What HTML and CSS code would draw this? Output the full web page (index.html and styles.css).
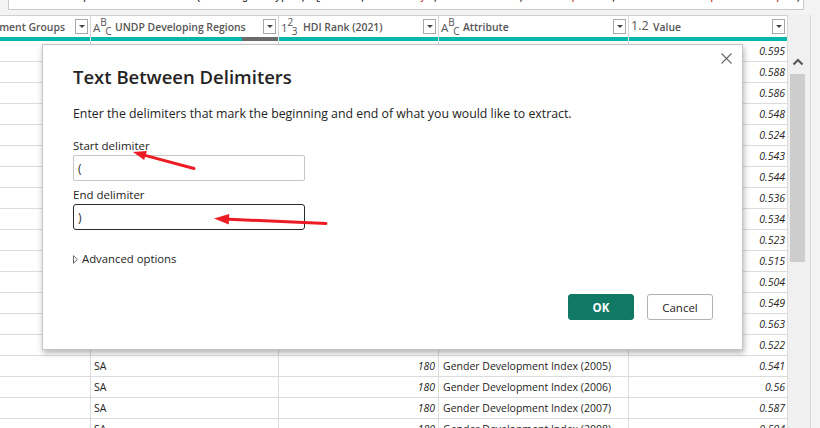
FILE: index.html
```html
<!DOCTYPE html>
<html lang="en">
<head>
<meta charset="utf-8">
<title>Text Between Delimiters</title>
<link rel="stylesheet" href="styles.css">
</head>
<body>
<div class="formula"><span class="code">= Table.UnpivotOtherColumns(#"Changed Type", {<span class="str">"ISO3"</span>, <span class="str">"Country"</span>, <span class="str">"Continent"</span>, <span class="str">"Hemisphere"</span>, <span class="str">"Human Development Groups"</span>, <span class="str">"UNDP Developing Regions"</span>}, <span class="str">"Attribute"</span>, <span class="str">"Value"</span>)</span></div>

<div class="main">
  <div class="grid">
    <div class="hcell h0"><span class="htext">Human Development Groups</span><span class="dd"></span></div>
    <div class="hcell"><span class="ticon"><span class="tA">A</span><span class="tB">B</span><span class="tC">C</span></span><span class="htext">UNDP Developing Regions</span><span class="dd"></span></div>
    <div class="hcell"><span class="ticon"><span class="tA">1</span><span class="tB">2</span><span class="tC">3</span></span><span class="htext">HDI Rank (2021)</span><span class="dd"></span></div>
    <div class="hcell"><span class="ticon"><span class="tA">A</span><span class="tB">B</span><span class="tC">C</span></span><span class="htext">Attribute</span><span class="dd"></span></div>
    <div class="hcell"><span class="ticon dec">1.2</span><span class="htext">Value</span><span class="dd"></span></div>

    <div class="qcell"></div>
    <div class="qcell q-err"></div>
    <div class="qcell"></div>
    <div class="qcell"></div>
    <div class="qcell"></div>

    <div class="c"></div><div class="c"></div><div class="c"></div><div class="c"></div><div class="c n v">0.595</div>
    <div class="c"></div><div class="c"></div><div class="c"></div><div class="c"></div><div class="c n v">0.588</div>
    <div class="c"></div><div class="c"></div><div class="c"></div><div class="c"></div><div class="c n v">0.586</div>
    <div class="c"></div><div class="c"></div><div class="c"></div><div class="c"></div><div class="c n v">0.548</div>
    <div class="c"></div><div class="c"></div><div class="c"></div><div class="c"></div><div class="c n v">0.524</div>
    <div class="c"></div><div class="c"></div><div class="c"></div><div class="c"></div><div class="c n v">0.543</div>
    <div class="c"></div><div class="c"></div><div class="c"></div><div class="c"></div><div class="c n v">0.544</div>
    <div class="c"></div><div class="c"></div><div class="c"></div><div class="c"></div><div class="c n v">0.536</div>
    <div class="c"></div><div class="c"></div><div class="c"></div><div class="c"></div><div class="c n v">0.534</div>
    <div class="c"></div><div class="c"></div><div class="c"></div><div class="c"></div><div class="c n v">0.523</div>
    <div class="c"></div><div class="c"></div><div class="c"></div><div class="c"></div><div class="c n v">0.515</div>
    <div class="c"></div><div class="c"></div><div class="c"></div><div class="c"></div><div class="c n v">0.504</div>
    <div class="c"></div><div class="c"></div><div class="c"></div><div class="c"></div><div class="c n v">0.549</div>
    <div class="c"></div><div class="c"></div><div class="c"></div><div class="c"></div><div class="c n v">0.563</div>
    <div class="c"></div><div class="c"></div><div class="c"></div><div class="c"></div><div class="c n v">0.522</div>
    <div class="c"></div><div class="c t">SA</div><div class="c n">180</div><div class="c t a">Gender Development Index (2005)</div><div class="c n v">0.541</div>
    <div class="c"></div><div class="c t">SA</div><div class="c n">180</div><div class="c t a">Gender Development Index (2006)</div><div class="c n v">0.56</div>
    <div class="c"></div><div class="c t">SA</div><div class="c n">180</div><div class="c t a">Gender Development Index (2007)</div><div class="c n v">0.587</div>
    <div class="c"></div><div class="c t">SA</div><div class="c n">180</div><div class="c t a">Gender Development Index (2008)</div><div class="c n v">0.594</div>
  </div>
  <div class="vscroll">
    <svg class="vs-up" width="12" height="8" viewBox="0 0 12 8"><path d="M1.5 6.5 L6 2 L10.5 6.5" fill="none" stroke="#555" stroke-width="2"/></svg>
    <div class="vs-thumb"></div>
  </div>
  <div class="rest"></div>
</div>

<div class="dialog">
  <svg class="close" width="11" height="11" viewBox="0 0 11 11"><path d="M0.5 0.5 L10.5 10.5 M10.5 0.5 L0.5 10.5" stroke="#666" stroke-width="1.1" fill="none"/></svg>
  <h1 class="title">Text Between Delimiters</h1>
  <p class="desc">Enter the delimiters that mark the beginning and end of what you would like to extract.</p>
  <label class="lbl lbl-first">Start delimiter</label>
  <input class="field" type="text" value="(">
  <label class="lbl">End delimiter</label>
  <input class="field field-focus" type="text" value=")">
  <div class="adv">
    <svg width="5" height="9" viewBox="0 0 5 9"><path d="M0.5 0.7 L4.4 4.5 L0.5 8.3 Z" fill="none" stroke="#555" stroke-width="0.9"/></svg>
    <span>Advanced options</span>
  </div>
  <div class="buttons">
    <button class="btn btn-ok">OK</button>
    <button class="btn btn-cancel">Cancel</button>
  </div>
</div>

<svg class="arrows" width="820" height="428" viewBox="0 0 820 428">
  <line x1="194" y1="168.5" x2="145" y2="155.4" stroke="#ec1c24" stroke-width="3" stroke-linecap="round"/>
  <polygon points="133,152 146.9,150.9 144.2,160" fill="#ec1c24"/>
  <line x1="326" y1="223.5" x2="229" y2="219.2" stroke="#ec1c24" stroke-width="3" stroke-linecap="round"/>
  <polygon points="214,218.5 229.2,213.9 228.8,224.4" fill="#ec1c24"/>
</svg>
</body>
</html>
```

FILE: styles.css
```css
* { box-sizing: border-box; }

body {
  margin: 0;
  width: 820px;
  height: 428px;
  overflow: hidden;
  position: relative;
  background: #f3f3f3;
  font-family: "Open Sans", "Noto Sans", sans-serif;
  color: #252423;
}

/* formula bar (only its lower edge is visible) */
.formula {
  margin-left: 8px;
  width: 796px;
  height: 10px;
  background: #fff;
  border: 1px solid #c8c8c8;
  border-top: 0;
  overflow: hidden;
  padding-left: 8px;
}
.code {
  display: block;
  margin-top: -9px;
  font: 11px/13px "Liberation Mono", monospace;
  white-space: pre;
  color: #111;
}
.str { color: #c21818; }

/* main area */
.main {
  display: flex;
  margin-top: 5px;
  height: 413px;
}

.grid {
  width: 788px;
  flex: none;
  height: 413px;
  overflow: hidden;
  background: #fff;
  border-top: 1px solid #d0d0d0;
  display: grid;
  grid-template-columns: 91px 188px 160px 190px 159px;
  grid-template-rows: 21px 4px;
  grid-auto-rows: 21px;
  align-content: start;
}

.hcell {
  display: flex;
  align-items: center;
  padding: 0 2px 0 2px;
  border-right: 1px solid #d6d6d6;
  overflow: hidden;
  white-space: nowrap;
  font-size: 10.4px;
  font-weight: 600;
  color: #555;
}
.h0 { justify-content: flex-end; }
.htext { flex: none; }
.h0 .dd { margin-left: 10px; }

.ticon {
  flex: none;
  width: 22px;
  font-size: 10px;
  font-weight: 400;
  color: #555;
  line-height: 1;
}
.tA { font-size: 11.5px; vertical-align: -2px; }
.tB { vertical-align: 4px; margin-right: -1.5px; }
.tC { vertical-align: -5px; }
.dec { font-size: 12.5px; vertical-align: 0; }

.dd {
  flex: none;
  margin-left: auto;
  width: 13px;
  height: 15px;
  border: 1px solid #a8a8a8;
  background: #fff;
  display: flex;
  justify-content: center;
  align-items: flex-start;
  padding-top: 5px;
}
.dd::after {
  content: "";
  border-left: 3px solid transparent;
  border-right: 3px solid transparent;
  border-top: 3px solid #444;
}

.qcell {
  background: #01b8aa;
  border-right: 1px solid #e6e6e6;
}
.q-err {
  background: linear-gradient(to right, #01b8aa 0 151px, #6b6b6b 151px);
}

.c {
  border-right: 1px solid #dcdcdc;
  border-bottom: 1px solid #dcdcdc;
  font-size: 10.5px;
  line-height: 20px;
  white-space: nowrap;
  overflow: hidden;
  color: #252423;
}
.t { padding-left: 3px; }
.a { padding-left: 4px; }
.n { text-align: right; font-style: italic; padding-right: 3px; }
.v { padding-right: 2px; }

/* vertical scrollbar */
.vscroll {
  width: 23px;
  flex: none;
  background: #f0f0f0;
  border-right: 1px solid #d6d6d6;
  display: flex;
  flex-direction: column;
}
.vs-up {
  margin-top: 43px;
  margin-left: 4px;
}
.vs-thumb {
  margin-top: 8px;
  margin-left: 2px;
  width: 15px;
  height: 188px;
  background: #cdcdcd;
}
.rest { flex: 1; background: #f3f3f3; }

/* dialog */
.dialog {
  position: absolute;
  left: 42px;
  top: 44px;
  width: 701px;
  height: 306px;
  background: #fff;
  border: 1px solid #c6c6c6;
  box-shadow: 1px 3px 6px rgba(0, 0, 0, 0.3);
  padding: 20px 29px 0 30px;
  display: flex;
  flex-direction: column;
  align-items: flex-start;
}
.close {
  position: absolute;
  top: 8px;
  right: 10px;
}
.title {
  margin: 0;
  font-size: 18.5px;
  line-height: 24px;
  font-weight: 600;
  color: #252423;
}
.desc {
  margin: 16px 0 0;
  font-size: 12.34px;
  line-height: 18px;
  color: #252423;
}
.lbl {
  display: block;
  margin-top: 5px;
  margin-bottom: 1px;
  font-size: 11.5px;
  line-height: 17px;
  color: #252423;
}
.lbl-first { margin-top: 14px; }

.field {
  display: block;
  width: 232px;
  height: 26px;
  margin: 0;
  padding: 0 4px;
  border: 1px solid #c8c6c4;
  border-radius: 2px;
  background: #fff;
  font-family: "Open Sans", sans-serif;
  font-size: 12px;
  color: #323130;
  outline: none;
}
.field-focus {
  border-color: #2b2b2b;
  border-radius: 3px;
}

.adv {
  margin-top: 21px;
  display: flex;
  align-items: center;
  gap: 4px;
  font-size: 11.33px;
  line-height: 16px;
  color: #252423;
}

.buttons {
  align-self: stretch;
  margin-top: 27px;
  display: flex;
  justify-content: flex-end;
  gap: 13px;
}
.btn {
  width: 66px;
  height: 26px;
  margin: 0;
  padding: 0;
  border-radius: 3px;
  font-family: "Open Sans", sans-serif;
  font-size: 11.5px;
  cursor: pointer;
}
.btn-ok {
  background: #117865;
  border: 1px solid #117865;
  color: #fff;
  font-weight: 700;
}
.btn-cancel {
  background: #fff;
  border: 1px solid #b3b0ad;
  color: #252423;
}

/* annotation arrows drawn over the dialog */
.arrows {
  position: absolute;
  left: 0;
  top: 0;
  pointer-events: none;
}
```
